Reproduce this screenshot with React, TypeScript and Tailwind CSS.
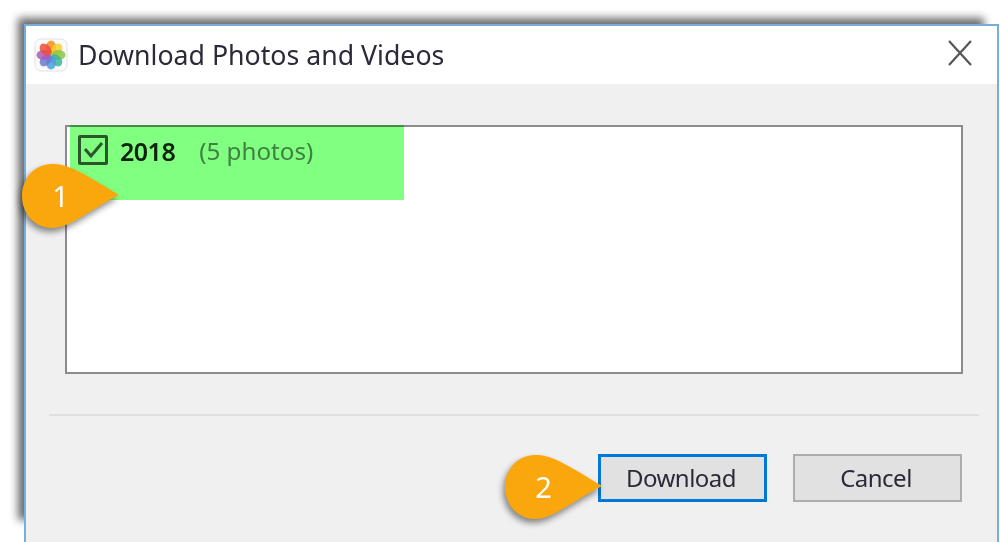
const petals = ["#f98a1c", "#f5d22c", "#8cc63f", "#3fb49a", "#4a9fe0", "#6d78d0", "#a85cb8", "#ef4b3c"];

function PhotosIcon() {
  return (
    <svg width="34" height="34" viewBox="0 0 34 34" className="shrink-0">
      <rect x="1" y="1" width="32" height="32" rx="6" fill="#fbfbfb" stroke="#e2e2e2" />
      {petals.map((color, i) => (
        <ellipse key={color} cx="17" cy="9.5" rx="5" ry="7" fill={color} opacity="0.85" transform={`rotate(${i * 45} 17 17)`} />
      ))}
    </svg>
  );
}

function Callout({ label, className }: { label: string; className: string }) {
  return (
    <div className={`absolute w-[98px] h-[64px] blur-[0.4px] drop-shadow-[-2px_4px_3px_rgba(0,0,0,0.45)] ${className}`}>
      <svg width="98" height="64" viewBox="0 0 98 64" className="block">
        <path d="M30 0C46 0 58 7 97 31C66 47 48 64 30 64C13 64 0 50 0 32C0 14 13 0 30 0Z" fill="#f9a70c" />
      </svg>
      <span className="absolute left-0 top-0 w-[77px] h-[64px] flex items-center justify-center text-white text-[29px]">{label}</span>
    </div>
  );
}

export default function App() {
  return (
    <div className="relative w-[1000px] h-[542px] overflow-hidden bg-white pt-[24px] pl-[24px] pr-[1px] font-['Noto_Sans',sans-serif] text-[#222]">
      {/* window shadow */}
      <div className="absolute left-[18px] top-[18px] w-[966px] h-[502px] bg-[#6a6a6a] blur-[4px]" />

      <div className="relative h-[518px] flex flex-col bg-[#f0f0f0] border-x-2 border-t-2 border-[#74aee0] blur-[0.7px]">
        <div className="h-[58px] shrink-0 bg-white flex items-center pl-[8px] pr-[25px]">
          <PhotosIcon />
          <span className="ml-[10px] text-[26.7px] leading-none text-[#2a2a38]">Download Photos and Videos</span>
          <svg width="24" height="26" viewBox="0 0 24 26" fill="none" stroke="#555" strokeWidth="2.2" className="ml-auto mb-[4px]">
            <path d="M1 1l22 24M23 1L1 25" />
          </svg>
        </div>

        <div className="flex-1 flex flex-col pt-[41px] pl-[23px] pr-[18px]">
          <div className="relative ml-[16px] mr-[16px] h-[249px] bg-white border-2 border-[#8c8c8c] pt-[8px] pl-[11px] flex items-start">
            <div className="w-[30px] h-[30px] border-[3px] border-[#555] rounded-[2px] flex items-center justify-center shrink-0">
              <svg width="24" height="24" viewBox="0 0 24 24" fill="none" stroke="#555" strokeWidth="3">
                <path d="M4 11l6 7L21 5" />
              </svg>
            </div>
            <span className="ml-[12px] text-[25px] leading-[32px] font-semibold tracking-[-0.5px]">2018</span>
            <span className="ml-[24px] text-[24.2px] leading-[32px] text-[#808080]">(5 photos)</span>
            {/* green highlight */}
            <div className="absolute -top-[2px] left-[3px] w-[334px] h-[75px] bg-[#80ff80] mix-blend-multiply" />
          </div>

          <div className="mt-[40px] h-[2px] bg-[#e0e0e0] shrink-0" />

          <div className="mt-[38px] mr-[17px] flex justify-end gap-[26px]">
            <button className="w-[169px] h-[48px] pr-[3px] bg-[#e1e1e1] border-[3px] border-[#0078d7] flex items-center justify-center text-[24px] tracking-[-0.5px] text-[#2a2a38]">Download</button>
            <button className="w-[169px] h-[48px] pr-[3px] bg-[#e1e1e1] border-2 border-[#adadad] flex items-center justify-center text-[24px] tracking-[-0.5px] text-[#2a2a38]">Cancel</button>
          </div>
        </div>
      </div>

      <Callout label="1" className="left-[22px] top-[164px]" />
      <Callout label="2" className="left-[505px] top-[455px]" />
    </div>
  );
}
